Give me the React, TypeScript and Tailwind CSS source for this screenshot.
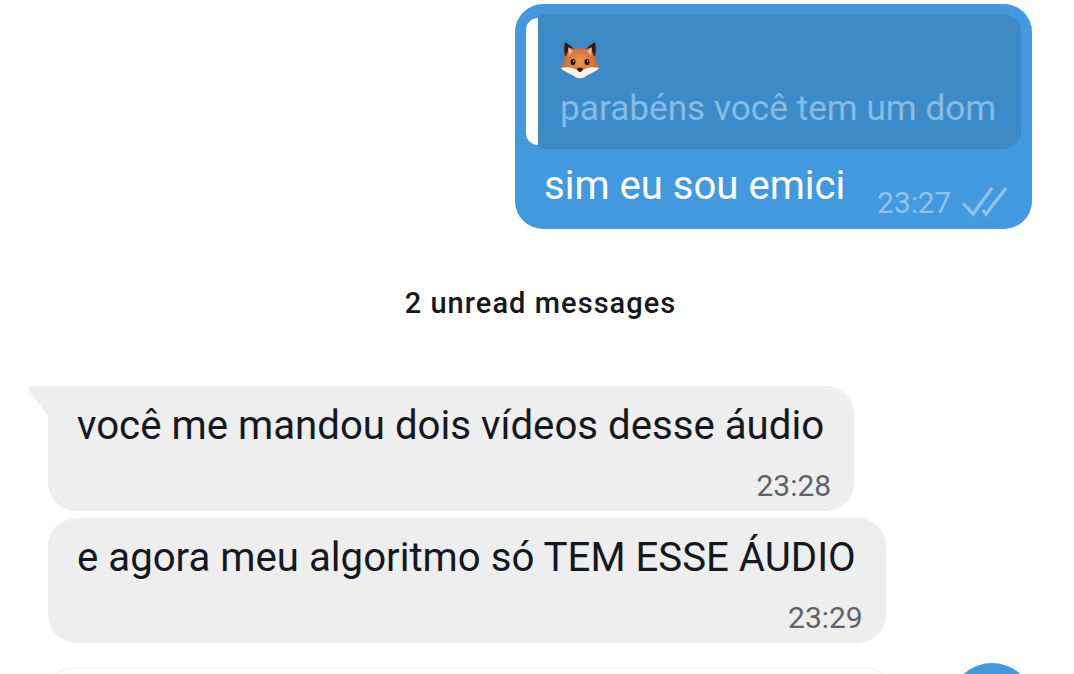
import React from 'react';

const Fox = () => (
  <svg width="40" height="38" viewBox="0 0 40 38">
    <defs>
      <radialGradient id="foxFur" cx="0.5" cy="0.55" r="0.6">
        <stop offset="0" stopColor="#f0954f" />
        <stop offset="1" stopColor="#bf5a2a" />
      </radialGradient>
    </defs>
    <path d="M5 1 C9 3 12 6 14 8 C17 7 23 7 26 8 C28 6 31 3 35 1 C36 6 36 12 35 17 C36 21 38 24 39.5 27 C35 31 29 33 26 35 C23 38 17 38 14 35 C11 33 5 31 .5 27 C2 24 4 21 5 17 C4 12 4 6 5 1 Z" fill="url(#foxFur)" />
    <path d="M5 1 C9 3 12 6 14 8 L10 7 C8 9 7 12 6 15 L5 15 C4 11 4 6 5 1 Z" fill="#2e1e18" />
    <path d="M35 1 C31 3 28 6 26 8 L30 7 C32 9 33 12 34 15 L35 15 C36 11 36 6 35 1 Z" fill="#2e1e18" />
    <path d="M8 6 L13 10 L9 15 Z" fill="#f0b48e" />
    <path d="M32 6 L27 10 L31 15 Z" fill="#f0b48e" />
    <path d="M.5 27 C5 26 11 26 15 28 C17 29 19 30 20 31 C21 30 23 29 25 28 C29 26 35 26 39.5 27 C35 31 29 33 26 35 C23 38 17 38 14 35 C11 33 5 31 .5 27 Z" fill="#fbf4ee" />
    <ellipse cx="13" cy="21" rx="2.5" ry="3" fill="#1c120e" />
    <ellipse cx="27" cy="21" rx="2.5" ry="3" fill="#1c120e" />
    <circle cx="13.6" cy="20" r=".7" fill="#ffffff" />
    <circle cx="27.6" cy="20" r=".7" fill="#ffffff" />
    <path d="M17 27.5 C18 26.5 22 26.5 23 27.5 C23 29.5 21 31 20 31 C19 31 17 29.5 17 27.5 Z" fill="#2a2222" />
  </svg>
);

const DoubleCheck = () => (
  <svg width="48" height="32" viewBox="0 0 48 32" fill="none" stroke="#8cc4ee" strokeWidth="3.2">
    <path d="M3 18 L13 29 L32 3" />
    <path d="M23 25 L26 29 L46 3" />
  </svg>
);

const Incoming = ({ text, time, tail }: { text: string; time: string; tail?: boolean }) => (
  <div className="relative h-[125px] w-fit rounded-[28px] bg-[#eeeeef] pl-[29px] pr-[30px] pt-[16px] text-[#15181c]">
    {tail && (
      <svg className="absolute left-[-20px] top-0" width="50" height="40" viewBox="0 0 50 40">
        <path d="M24 0 H4 C1 0 0 3 2 6 L20 30 V40 H50 V0 Z" fill="#eeeeef" />
      </svg>
    )}
    <p className="relative text-[40.2px] leading-[48px]">{text}</p>
    <p className="relative mt-[20px] mr-[-7px] text-right text-[30px] leading-[32px] text-[#5f6368]">{time}</p>
  </div>
);

export default function App() {
  return (
    <div className="flex h-[674px] w-[1074px] flex-col overflow-hidden bg-white font-['Roboto',sans-serif]">
      <div className="flex justify-end pr-[42px] pt-[4px]">
        <div className="h-[225px] w-[517px] rounded-[28px] bg-[#4399dd] p-[10px] pl-[11px]">
          <div className="flex h-[135px] w-[495px] items-center">
            <div className="h-[127px] w-[12px] rounded-l-[14px] bg-white" />
            <div className="h-[135px] flex-1 rounded-l-[6px] rounded-r-[18px] bg-[#3d8ac8] pl-[22px] pt-[27px]">
              <Fox />
              <p className="mt-[9px] text-[35.2px] leading-[40px] text-[#84bce8]">parabéns você tem um dom</p>
            </div>
          </div>
          <div className="flex items-start pl-[18px]">
            <p className="mt-[15px] text-[40.1px] leading-[44px] text-white">sim eu sou emici</p>
            <p className="ml-[32px] mt-[37px] text-[29.7px] leading-[34px] text-[#8cc4ee]">23:27</p>
            <div className="ml-[9px] mt-[36px]">
              <DoubleCheck />
            </div>
          </div>
        </div>
      </div>

      <p className="mt-[58px] pl-[7px] text-center text-[29px] font-medium leading-[32px] tracking-[1.05px] text-[#15181c]">2 unread messages</p>

      <div className="mt-[67px] flex flex-col items-start gap-[7px] pl-[48px]">
        <Incoming text="você me mandou dois vídeos desse áudio" time="23:28" tail />
        <Incoming text="e agora meu algoritmo só TEM ESSE ÁUDIO" time="23:29" />
      </div>

      <div className="mt-[24px] flex items-start pl-[45px]">
        <div className="h-[60px] w-[848px] shrink-0 rounded-[28px] border-2 border-[#f4f4f4] bg-white" />
        <div className="ml-[57px] mt-[-4px] h-[84px] w-[84px] shrink-0 rounded-full bg-[#4399dd]" />
      </div>
    </div>
  );
}
